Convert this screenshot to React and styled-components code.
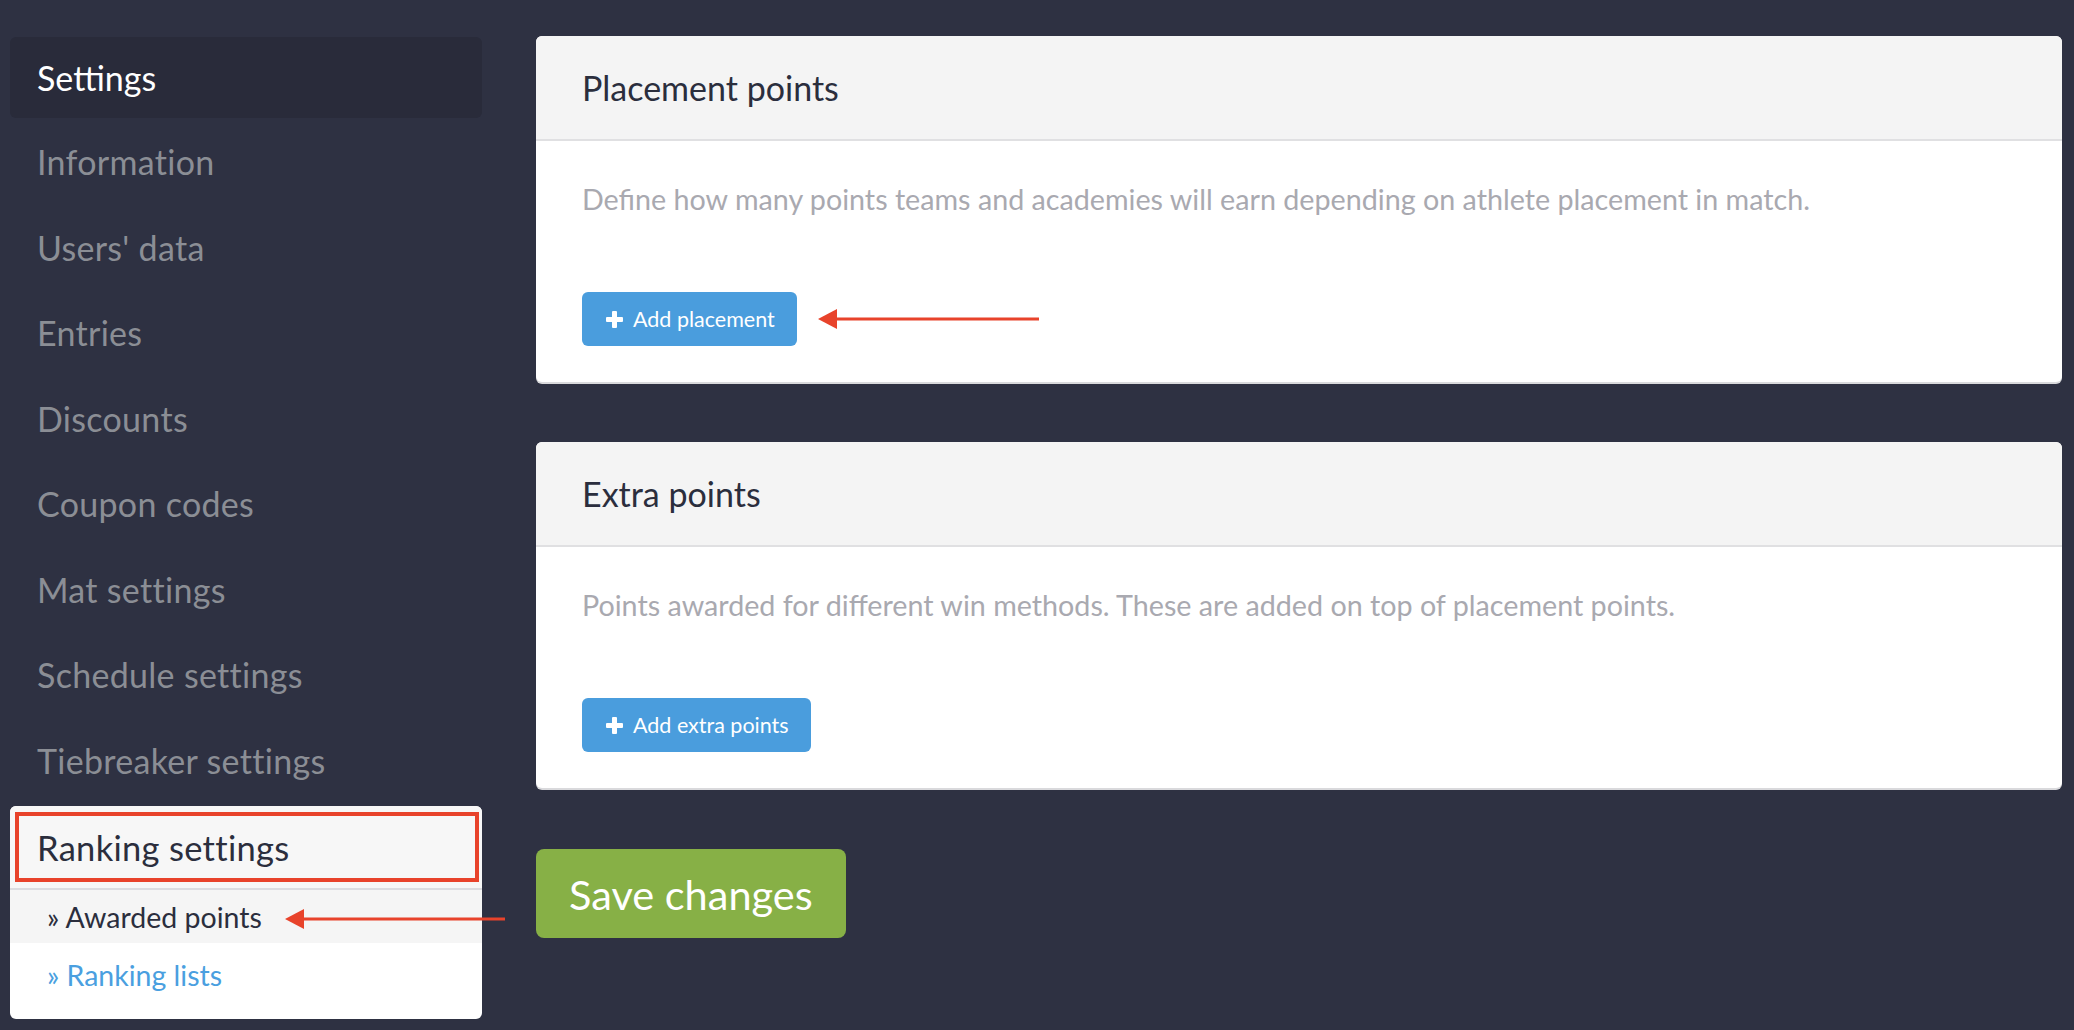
import React from 'react';
import styled, { createGlobalStyle } from 'styled-components';

const FONT = `'Lato', 'Open Sans', 'Noto Sans', sans-serif`;

const GlobalStyle = createGlobalStyle`
  * { box-sizing: border-box; }
  html, body { margin: 0; padding: 0; background: #2e3142; }
  body { font-family: ${FONT}; width: 2074px; height: 1030px; overflow: hidden; }
`;

const Page = styled.div`
  display: flex;
  align-items: flex-start;
  gap: 54px;
  padding: 36px 12px 0 10px;
  height: 1030px;
`;

const Sidebar = styled.nav`
  flex: none;
  width: 472px;
  display: flex;
  flex-direction: column;
`;

const SidebarTitle = styled.div`
  height: 81px;
  margin-top: 1px;
  display: flex;
  align-items: center;
  padding-left: 27px;
  background: #292b3a;
  border-radius: 6px;
  color: #ffffff;
  font-size: 34px;
`;

const NavItem = styled.a`
  height: 85.5px;
  display: flex;
  align-items: center;
  padding: 2px 0 0 27px;
  color: #8b8e95;
  font-size: 34px;
  letter-spacing: 0.3px;
  text-decoration: none;
`;

const RankingPanel = styled.div`
  margin-top: 4px;
  background: #ffffff;
  border-radius: 6px;
  position: relative;
  padding-bottom: 16px;
`;

const RankingHeader = styled.div`
  position: relative;
  height: 84px;
  display: flex;
  align-items: center;
  padding-left: 27px;
  background: #f7f7f7;
  border-radius: 6px 6px 0 0;
  border-bottom: 2px solid #dcdce0;
  color: #2b2e3d;
  font-size: 34.5px;
  letter-spacing: 0.3px;
`;

const Highlight = styled.span`
  position: absolute;
  top: 6px;
  bottom: 6px;
  left: 5px;
  right: 3px;
  border: 4px solid #e8432b;
  pointer-events: none;
`;

const SubItem = styled.a`
  position: relative;
  display: flex;
  align-items: center;
  height: ${p => (p.$active ? 53 : 60)}px;
  padding-left: 37px;
  padding-top: ${p => (p.$active ? 0 : 3)}px;
  background: ${p => (p.$active ? '#f5f5f5' : 'transparent')};
  color: ${p => (p.$active ? '#2b2e3d' : '#4a9fe0')};
  font-size: 28.5px;
  text-decoration: none;
`;

const SideArrow = styled.span`
  position: absolute;
  left: 275px;
  top: 19px;
  line-height: 0;
`;

const Main = styled.main`
  flex: 1;
  display: flex;
  flex-direction: column;
  align-items: flex-start;
  gap: 60px;
`;

const Card = styled.section`
  align-self: stretch;
  background: #ffffff;
  border-radius: 6px;
  box-shadow: 0 2px 0 #d9d9dc;
`;

const CardHeader = styled.header`
  height: 105px;
  display: flex;
  align-items: center;
  padding-left: 46px;
  background: #f4f4f4;
  border-radius: 6px 6px 0 0;
  border-bottom: 2px solid #e0e0e2;
`;

const CardTitle = styled.h2`
  margin: 0;
  font-weight: 400;
  font-size: 34px;
  color: #2b2e3d;
`;

const CardBody = styled.div`
  padding: 42px 46px 36px;
`;

const Description = styled.p`
  margin: 0;
  font-size: 28.7px;
  line-height: 32px;
  color: #a9a9b0;
`;

const ActionRow = styled.div`
  margin-top: 77px;
  display: flex;
  align-items: center;
  gap: 21px;
`;

const AddButton = styled.button`
  height: 54px;
  display: inline-flex;
  align-items: center;
  gap: 10px;
  padding: 0 22px 0 24px;
  border: none;
  border-radius: 6px;
  background: #4a9ddd;
  color: #ffffff;
  font-family: ${FONT};
  font-size: 21.5px;
  cursor: pointer;
`;

const SaveButton = styled.button`
  height: 89px;
  margin-top: 1px;
  padding: 0 33px;
  border: none;
  border-radius: 8px;
  background: #87b046;
  color: #ffffff;
  font-family: ${FONT};
  font-size: 41.5px;
  cursor: pointer;
`;

const PlusIcon = () => (
  <svg width="17" height="17" viewBox="0 0 17 17" aria-hidden="true">
    <rect x="6" y="0" width="5" height="17" rx="1" fill="#fff" />
    <rect x="0" y="6" width="17" height="5" rx="1" fill="#fff" />
  </svg>
);

const RedArrow = ({ width }) => (
  <svg width={width} height="20" viewBox={`0 0 ${width} 20`} aria-hidden="true">
    <line x1="17" y1="10" x2={width} y2="10" stroke="#e8432b" strokeWidth="3" />
    <polygon points="0,10 19,0 19,20" fill="#e8432b" />
  </svg>
);

const navItems = [
  'Information',
  "Users' data",
  'Entries',
  'Discounts',
  'Coupon codes',
  'Mat settings',
  'Schedule settings',
  'Tiebreaker settings',
];

export default function App() {
  return (
    <>
      <GlobalStyle />
      <Page>
        <Sidebar>
          <SidebarTitle>Settings</SidebarTitle>
          {navItems.map(item => (
            <NavItem key={item}>{item}</NavItem>
          ))}
          <RankingPanel>
            <RankingHeader>
              Ranking settings
              <Highlight />
            </RankingHeader>
            <SubItem $active>
              » Awarded points
              <SideArrow>
                <RedArrow width={220} />
              </SideArrow>
            </SubItem>
            <SubItem>» Ranking lists</SubItem>
          </RankingPanel>
        </Sidebar>
        <Main>
          <Card>
            <CardHeader>
              <CardTitle>Placement points</CardTitle>
            </CardHeader>
            <CardBody>
              <Description>
                Define how many points teams and academies will earn depending on athlete placement in match.
              </Description>
              <ActionRow>
                <AddButton>
                  <PlusIcon />
                  Add placement
                </AddButton>
                <RedArrow width={221} />
              </ActionRow>
            </CardBody>
          </Card>
          <Card>
            <CardHeader>
              <CardTitle>Extra points</CardTitle>
            </CardHeader>
            <CardBody>
              <Description>
                Points awarded for different win methods. These are added on top of placement points.
              </Description>
              <ActionRow>
                <AddButton>
                  <PlusIcon />
                  Add extra points
                </AddButton>
              </ActionRow>
            </CardBody>
          </Card>
          <SaveButton>Save changes</SaveButton>
        </Main>
      </Page>
    </>
  );
}
